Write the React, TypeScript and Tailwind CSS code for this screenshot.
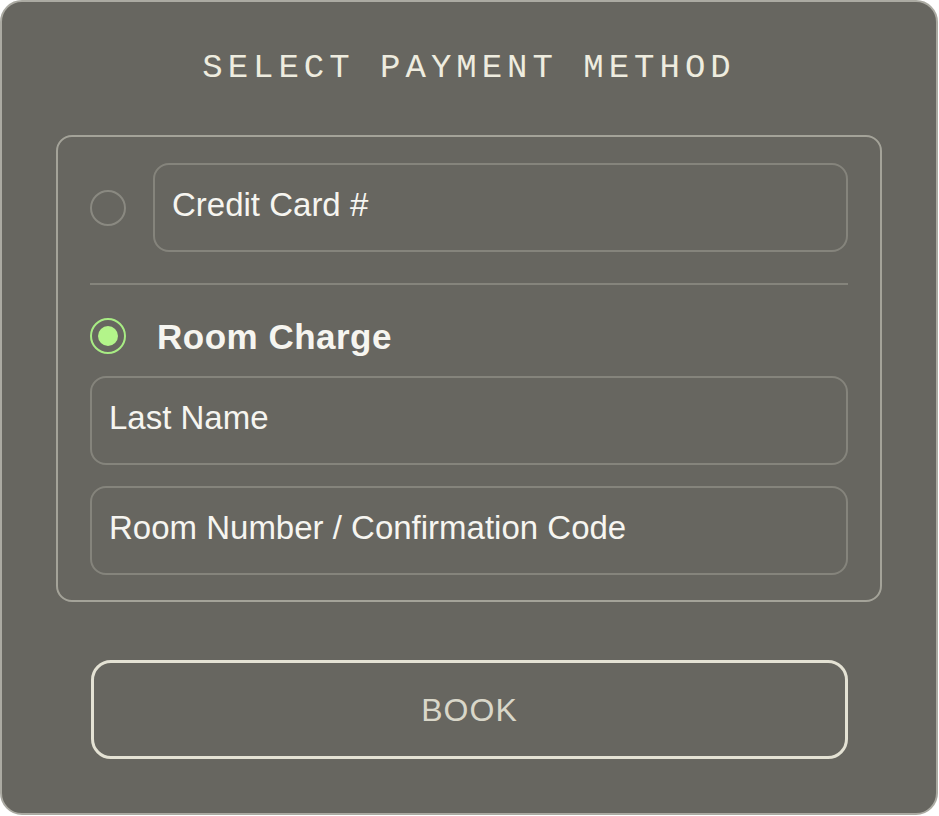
import React, { useState } from 'react';

const sans = { fontFamily: '"Liberation Sans", Arial, sans-serif' };

const Radio: React.FC<{ checked: boolean; onClick: () => void }> = ({ checked, onClick }) => (
  <button
    type="button"
    onClick={onClick}
    className={`flex h-[36px] w-[36px] shrink-0 items-center justify-center rounded-full border-2 ${
      checked ? 'border-[#a8ec84]' : 'border-[#8a8981]'
    }`}
  >
    {checked && <span className="h-[20px] w-[20px] rounded-full bg-[#b3f48a]" />}
  </button>
);

const Field: React.FC<{ placeholder: string; className?: string }> = ({ placeholder, className = '' }) => (
  <input
    type="text"
    placeholder={placeholder}
    style={sans}
    className={`h-[89px] w-full rounded-[16px] border-2 border-[#85847c] bg-transparent px-[17px] pb-[6px] text-[33px] text-[#f6f5f0] placeholder:text-[#f6f5f0] focus:outline-none ${className}`}
  />
);

export default function App() {
  const [method, setMethod] = useState<'card' | 'room'>('room');

  return (
    <div className="min-h-screen bg-white">
      <div className="flex h-[815px] w-[938px] flex-col rounded-[22px] border-2 border-[#abaaa2] bg-[#676660]">
        <h1
          className="pt-[49px] text-center text-[34px] leading-none tracking-[5px] text-[#eeecdf]"
          style={{ fontFamily: '"Liberation Mono", "DejaVu Sans Mono", monospace' }}
        >
          SELECT PAYMENT METHOD
        </h1>

        <div className="mx-[54px] mt-[50px] flex flex-col rounded-[16px] border-2 border-[#a4a399] px-[32px] pt-[26px] pb-[25px]">
          <div className="flex items-center gap-[27px]">
            <Radio checked={method === 'card'} onClick={() => setMethod('card')} />
            <Field placeholder="Credit Card #" />
          </div>

          <div className="mt-[31px] h-[2px] bg-[#85847c]" />

          <div className="mt-[33px] flex items-center gap-[31px]">
            <Radio checked={method === 'room'} onClick={() => setMethod('room')} />
            <span className="text-[35px] font-bold leading-none tracking-[0.5px] text-[#f6f5f0]" style={sans}>
              Room Charge
            </span>
          </div>

          <Field placeholder="Last Name" className="mt-[22px]" />
          <Field placeholder="Room Number / Confirmation Code" className="mt-[21px]" />
        </div>

        <button
          type="button"
          className="ml-[89px] mr-[88px] mt-[58px] h-[99px] rounded-[20px] border-[3px] border-[#e4e2d4] text-[32px] tracking-[1px] text-[#d9d7c9]"
          style={sans}
        >
          BOOK
        </button>
      </div>
    </div>
  );
}
